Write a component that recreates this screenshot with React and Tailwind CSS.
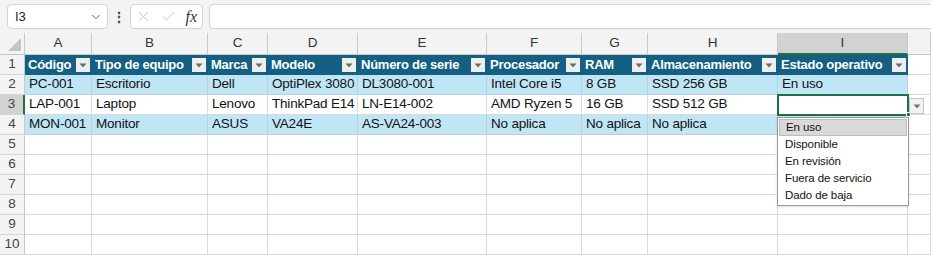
import { ChevronDown, X, Check } from 'lucide-react'

const cols = ['A', 'B', 'C', 'D', 'E', 'F', 'G', 'H', 'I', '']

const headers = [
  'Código',
  'Tipo de equipo',
  'Marca',
  'Modelo',
  'Número de serie',
  'Procesador',
  'RAM',
  'Almacenamiento',
  'Estado operativo',
]

const rows = [
  ['PC-001', 'Escritorio', 'Dell', 'OptiPlex 3080', 'DL3080-001', 'Intel Core i5', '8 GB', 'SSD 256 GB', 'En uso'],
  ['LAP-001', 'Laptop', 'Lenovo', 'ThinkPad E14', 'LN-E14-002', 'AMD Ryzen 5', '16 GB', 'SSD 512 GB', ''],
  ['MON-001', 'Monitor', 'ASUS', 'VA24E', 'AS-VA24-003', 'No aplica', 'No aplica', 'No aplica', ''],
]

const options = ['En uso', 'Disponible', 'En revisión', 'Fuera de servicio', 'Dado de baja']

const FilterButton = () => (
  <div className="w-[14px] h-[14px] bg-[#eeeeee] flex items-center justify-center shrink-0">
    <svg width="8" height="5" viewBox="0 0 8 5">
      <path d="M0.5 0.5 L7.5 0.5 L4 4.5 Z" fill="#6b6b6b" />
    </svg>
  </div>
)

const RowHead = ({ n, active }) => (
  <div
    className={`h-[20px] flex items-center justify-center text-[13.5px] text-[#444] border-b border-[#d6d6d6] ${
      active ? 'bg-[#d2d2d2] border-r-2 border-r-[#1e7145]' : 'bg-[#f3f3f3] border-r border-r-[#c8c8c8]'
    }`}
  >
    {n}
  </div>
)

const Cell = ({ children, blue, className = '' }) => (
  <div
    className={`h-[20px] flex items-center pl-[4px] whitespace-nowrap overflow-hidden border-r border-b ${
      blue ? 'bg-[#c0e6f5] border-[#b3d3e3]' : 'bg-white border-[#dadada]'
    } ${className}`}
  >
    {children}
  </div>
)

export default function App() {
  return (
    <div
      className="w-[931px] h-[257px] overflow-hidden bg-white text-[#111] relative"
      style={{ fontFamily: '"Liberation Sans", Arial, sans-serif' }}
    >
      {/* formula bar */}
      <div className="h-[33px] bg-[#f3f3f3] flex items-center pl-[7px] overflow-hidden">
        <div className="w-[101px] h-[25px] bg-white border border-[#d4d4d4] rounded-[4px] flex items-center justify-between pl-[7px] pr-[4px]">
          <span className="text-[13px] text-[#222]">I3</span>
          <ChevronDown size={14} strokeWidth={1.5} color="#555" />
        </div>
        <div className="ml-[4px] text-[#444] text-[14px] font-bold leading-none">⋮</div>
        <div className="ml-[4px] w-[73px] h-[25px] bg-white border border-[#d4d4d4] rounded-[4px] flex items-center justify-between px-[4px]">
          <X size={17} strokeWidth={1.1} color="#b4b4b4" />
          <Check size={17} strokeWidth={1.1} color="#b4b4b4" />
          <span
            className="italic text-[16px] text-[#333] pr-[1px]"
            style={{ fontFamily: '"Liberation Serif", "Times New Roman", serif' }}
          >
            fx
          </span>
        </div>
        <div className="ml-[6px] flex-1 h-[25px] bg-white border border-[#d4d4d4] rounded-[4px] -mr-[10px]" />
      </div>

      {/* sheet */}
      <div className="grid grid-cols-[25px_67px_116px_60px_90px_129px_95px_66px_130px_130px_1fr]">
        {/* column letters */}
        <div className="h-[22px] bg-[#f3f3f3] border-r border-b border-[#c8c8c8] flex items-end justify-end p-[3px]">
          <svg width="13" height="13" viewBox="0 0 13 13">
            <path d="M13 0 L13 13 L0 13 Z" fill="#c4c4c4" />
          </svg>
        </div>
        {cols.map((c, i) =>
          c === 'I' ? (
            <div
              key={i}
              className="h-[22px] bg-[#d2d2d2] border-r border-[#c8c8c8] border-b-2 border-b-[#1e7145] flex items-center justify-center text-[13.5px] text-[#333]"
            >
              {c}
            </div>
          ) : (
            <div
              key={i}
              className="h-[22px] bg-[#f3f3f3] border-r border-b border-[#c8c8c8] flex items-center justify-center text-[13.5px] text-[#333]"
            >
              {c}
            </div>
          )
        )}

        {/* row 1: table headers */}
        <RowHead n={1} />
        {headers.map((h) => (
          <div
            key={h}
            className="h-[20px] bg-[#156082] flex items-center justify-between pl-[3px] pr-[2px] whitespace-nowrap overflow-hidden"
          >
            <span className="text-white font-bold text-[13px] tracking-[-0.25px]">{h}</span>
            <FilterButton />
          </div>
        ))}
        <Cell />

        {/* data rows */}
        {rows.map((r, ri) => (
          <div key={ri} className="contents">
            <RowHead n={ri + 2} active={ri === 1} />
            {r.map((v, ci) =>
              ri === 1 && ci === 8 ? (
                <div
                  key={ci}
                  className="h-[20px] bg-white relative outline-2 outline-[#1e7145] -outline-offset-1 border-b border-[#dadada]"
                >
                  <div className="absolute right-[-3px] bottom-[-3px] w-[5px] h-[5px] bg-[#1e7145] border border-white" />
                </div>
              ) : (
                <Cell key={ci} blue={ri !== 1}>
                  <span className="text-[13.5px] tracking-[-0.2px]">{v}</span>
                </Cell>
              )
            )}
            <Cell />
          </div>
        ))}

        {/* empty rows */}
        {[5, 6, 7, 8, 9, 10].map((n) => (
          <div key={n} className="contents">
            <RowHead n={n} />
            {cols.map((c, i) => (
              <Cell key={i} />
            ))}
          </div>
        ))}
      </div>

      {/* data validation arrow */}
      <div className="absolute left-[909px] top-[98px] w-[15px] h-[16px] bg-[#f3f3f3] border border-[#c6c6c6] flex items-center justify-center">
        <svg width="8" height="5" viewBox="0 0 8 5">
          <path d="M0.5 0.5 L7.5 0.5 L4 4.5 Z" fill="#777" />
        </svg>
      </div>

      {/* dropdown list */}
      <div className="absolute left-[777px] top-[117px] w-[132px] bg-white border border-[#9a9a9a] py-[1px] px-[1px] shadow-sm">
        {options.map((o, i) => (
          <div
            key={o}
            className={`h-[17px] flex items-center pl-[6px] text-[11.5px] tracking-[-0.1px] text-[#111] ${
              i === 0 ? 'bg-[#d9d9d9] border border-[#bdbdbd]' : ''
            }`}
          >
            {o}
          </div>
        ))}
      </div>
    </div>
  )
}
